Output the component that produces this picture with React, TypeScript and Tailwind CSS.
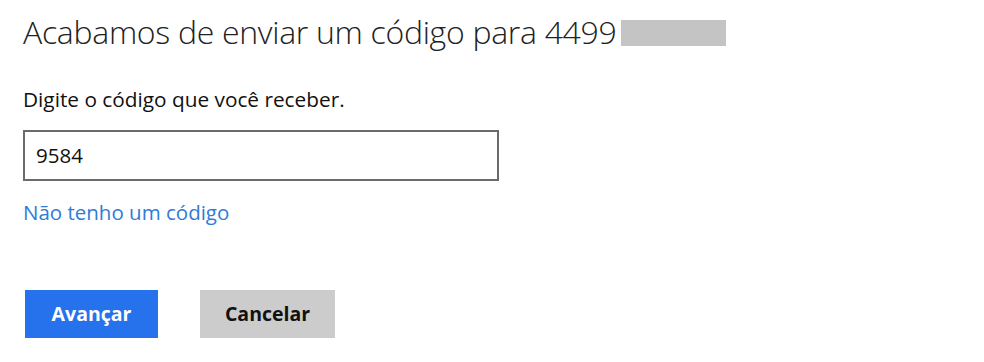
import React from "react";

export default function App() {
  return (
    <div className="w-[984px] h-[362px] bg-white flex flex-col pl-[23px] pt-[10px]" style={{ fontFamily: '"Open Sans", "Noto Sans", sans-serif' }}>
      <div className="flex items-center h-[44px]">
        <span className="text-[32px] font-light text-[#222] leading-[44px] tracking-[-0.3px]">Acabamos de enviar um código para 4499</span>
        <span className="ml-[4px] w-[105px] h-[26px] bg-[#c4c4c4] mt-[2px]" />
      </div>
      <div className="mt-[31px] text-[20.8px] text-[#111] leading-[28px]">Digite o código que você receber.</div>
      <div className="mt-[17px] w-[476px] h-[51px] border-2 border-[#6b6b6b] flex items-center px-[11px] text-[20.5px] text-[#111]">9584</div>
      <div className="mt-[17px] text-[20.5px] text-[#2e7cd6] leading-[28px]">Não tenho um código</div>
      <div className="mt-[64px] flex gap-[42px] pl-[2px]">
        <button className="w-[133px] h-[48px] bg-[#2672ec] text-white text-[19.5px] font-bold">Avançar</button>
        <button className="w-[135px] h-[48px] bg-[#cccccc] text-[#111] text-[19.5px] font-bold">Cancelar</button>
      </div>
    </div>
  );
}
